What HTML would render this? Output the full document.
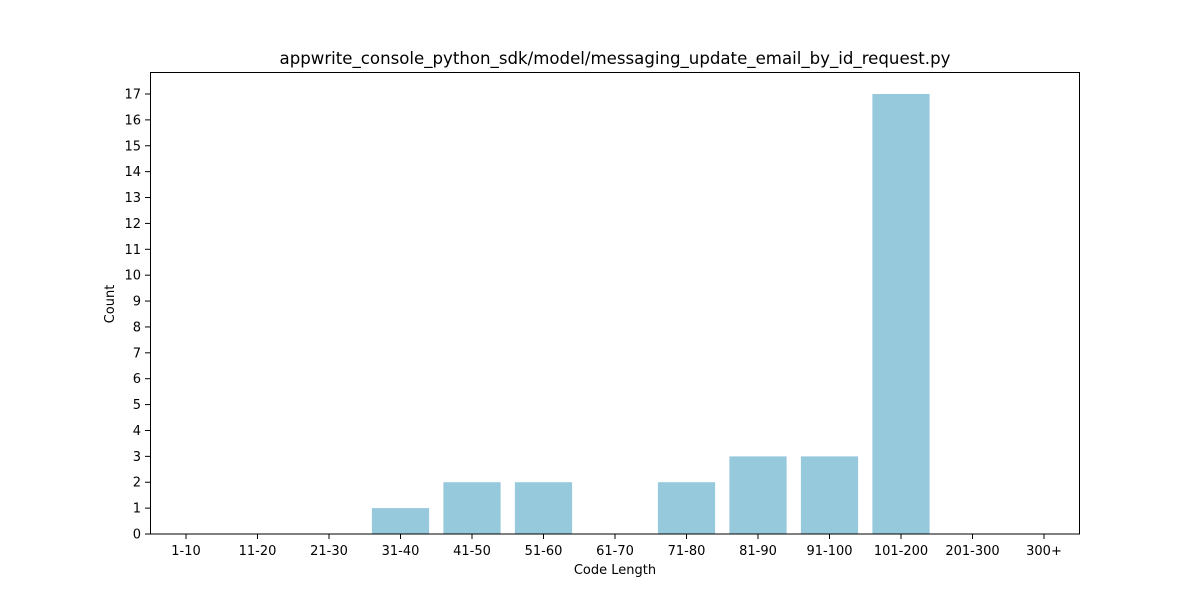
<!DOCTYPE html>
<html><head><meta charset="utf-8"><style>body{margin:0;background:#fff}svg{display:block}text{font-family:"DejaVu Sans","Liberation Sans",sans-serif;fill:#000}</style></head>
<body>
<svg width="1200" height="600" xmlns="http://www.w3.org/2000/svg">
<rect width="1200" height="600" fill="#fff"/>
<g fill="#96c9dc">
<rect x="371.9" y="508.1" width="57.2" height="25.9"/>
<rect x="443.4" y="482.2" width="57.2" height="51.8"/>
<rect x="514.9" y="482.2" width="57.2" height="51.8"/>
<rect x="657.9" y="482.2" width="57.2" height="51.8"/>
<rect x="729.4" y="456.4" width="57.2" height="77.6"/>
<rect x="800.9" y="456.4" width="57.2" height="77.6"/>
<rect x="872.4" y="94" width="57.2" height="440"/>
</g>
<rect x="150.5" y="72.5" width="929" height="461.5" fill="none" stroke="#000" stroke-width="1"/>
<g stroke="#000" stroke-width="1" id="yt"></g>
<g font-size="13" text-anchor="end" id="yl"></g>
<g font-size="13" text-anchor="middle" id="xl"></g>
<text x="615" y="64" font-size="16.6" text-anchor="middle">appwrite_console_python_sdk/model/messaging_update_email_by_id_request.py</text>
<text x="615" y="574" font-size="13" text-anchor="middle">Code Length</text>
<text x="114" y="304" font-size="13" text-anchor="middle" transform="rotate(-90 114 304)">Count</text>
<script>
var ns="http://www.w3.org/2000/svg",yt=document.getElementById('yt'),yl=document.getElementById('yl'),xl=document.getElementById('xl');
for(var i=0;i<=17;i++){var y=534-i*440/17;var l=document.createElementNS(ns,'line');l.setAttribute('x1',145);l.setAttribute('x2',150);l.setAttribute('y1',y);l.setAttribute('y2',y);yt.appendChild(l);var t=document.createElementNS(ns,'text');t.setAttribute('x',141);t.setAttribute('y',y+4.5);t.textContent=i;yl.appendChild(t);}
var c=['1-10','11-20','21-30','31-40','41-50','51-60','61-70','71-80','81-90','91-100','101-200','201-300','300+'];
for(var i=0;i<13;i++){var x=186+i*71.5;var l=document.createElementNS(ns,'line');l.setAttribute('x1',x);l.setAttribute('x2',x);l.setAttribute('y1',534);l.setAttribute('y2',539);yt.appendChild(l);var t=document.createElementNS(ns,'text');t.setAttribute('x',x);t.setAttribute('y',555);t.textContent=c[i];xl.appendChild(t);}
</script>
</svg>
</body></html>
